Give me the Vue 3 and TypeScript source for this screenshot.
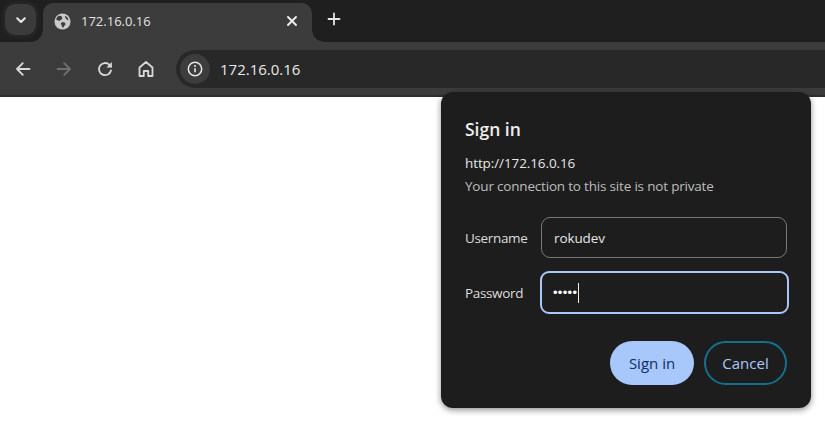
<script setup lang="ts">
const tabTitle = '172.16.0.16'
</script>

<template>
  <div class="page">
    <header class="chrome">
      <div class="strip">
        <button class="tab-search" aria-label="Search tabs">
          <svg width="12" height="12" viewBox="0 0 12 12"><path d="M2.200 4.200 6 8l3.800-3.800" fill="none" stroke="#e8e8e8" stroke-width="2" stroke-linecap="round" stroke-linejoin="round"/></svg>
        </button>
        <div class="tab">
          <svg class="globe" width="17" height="17" viewBox="0 0 18 18">
            <circle cx="9" cy="9" r="8.500" fill="#c9c9c9"/>
            <path d="M5 3c1.600 0 3 .4 3.600 1.400.6 1 .1 1.900-.8 2.400-1 .5-1.200 1.300-2.200 1.400C4.400 8.300 3.200 7.400 2.200 7 2.600 5.400 3.600 4 5 3ZM8 10c1.500-.4 3.400 0 4 1 .4.900-.3 1.600-.8 2.300-.5.800-.8 1.800-1.800 2.300-.8-.5-.9-1.500-1.300-2.500C7.400 12 6.800 10.400 8 10ZM11.800 3c1.800.9 3.100 2.300 3.700 4.200-1.200.4-2.200-.2-2.700-1.100-.6-1-1.600-1.200-1-3.100Z" fill="#3c3c3c"/>
          </svg>
          <span class="tab-title">{{ tabTitle }}</span>
          <svg class="close" width="12" height="12" viewBox="0 0 12 12"><path d="M2 2l8 8M10 2l-8 8" stroke="#eee" stroke-width="1.900" stroke-linecap="round"/></svg>
        </div>
        <svg class="plus" width="14" height="14" viewBox="0 0 14 14"><path d="M7 1.500v11M1.500 7h11" stroke="#e6e6e6" stroke-width="1.800" stroke-linecap="round"/></svg>
      </div>
      <div class="toolbar">
        <svg class="nav" width="18" height="18" viewBox="0 0 18 18"><path d="M15.500 9H3M8.800 3.200 3 9l5.800 5.800" fill="none" stroke="#d8d8d8" stroke-width="1.800" stroke-linecap="round" stroke-linejoin="round"/></svg>
        <svg class="nav" width="18" height="18" viewBox="0 0 18 18"><path d="M2.500 9H15M9.200 3.200 15 9l-5.800 5.800" fill="none" stroke="#6f6f6f" stroke-width="1.800" stroke-linecap="round" stroke-linejoin="round"/></svg>
        <svg class="nav" width="18" height="18" viewBox="0 0 18 18"><path d="M15 10.500A6.100 6.100 0 1 1 13.300 4.700L15 6.500" fill="none" stroke="#d8d8d8" stroke-width="1.800" stroke-linecap="round"/><path d="M15.800 2v5.400h-5.400z" fill="#d8d8d8"/></svg>
        <svg class="nav" width="18" height="18" viewBox="0 0 18 18"><path d="M2.500 16V7.500L9 2l6.500 5.500V16h-4.300v-5H6.800v5Z" fill="none" stroke="#d8d8d8" stroke-width="1.800" stroke-linejoin="round"/></svg>
        <div class="omnibox">
          <span class="info">
            <svg width="16" height="16" viewBox="0 0 16 16"><circle cx="8" cy="8" r="6.700" fill="none" stroke="#e8e8e8" stroke-width="1.500"/><path d="M8 7.200v4" stroke="#e8e8e8" stroke-width="1.600"/><circle cx="8" cy="4.900" r="1" fill="#e8e8e8"/></svg>
          </span>
          <span class="url">172.16.0.16</span>
        </div>
      </div>
    </header>

    <main class="content">
      <section class="dialog">
        <h1>Sign in</h1>
        <p class="origin">http://172.16.0.16</p>
        <p class="warning">Your connection to this site is not private</p>
        <div class="field first">
          <label>Username</label>
          <div class="input">rokudev</div>
        </div>
        <div class="field second">
          <label>Password</label>
          <div class="input focused"><span class="dots">•••••</span><i class="caret"></i></div>
        </div>
        <div class="actions">
          <button class="primary">Sign in</button>
          <button class="secondary">Cancel</button>
        </div>
      </section>
    </main>
  </div>
</template>

<style>
html, body { margin: 0; background: #fff; }
</style>

<style scoped>
.page { width: 825px; height: 428px; overflow: hidden; background: #fff; font-family: "Open Sans", "Noto Sans", sans-serif; }
.chrome { height: 97px; display: flex; flex-direction: column; }
.strip { height: 42px; background: #1f1f1f; display: flex; align-items: flex-end; position: relative; }
.tab-search { width: 31px; height: 31px; margin: 0 0 7px 5px; border: 0; border-radius: 10px; background: #3b3b3b; display: flex; align-items: center; justify-content: center; padding: 0; box-shadow: 0 0 0 3px #242424; }
.tab { width: 269px; height: 39px; margin-left: 7px; background: #3c3c3c; border-radius: 10px 10px 0 0; display: flex; align-items: center; padding: 0 14px 3px 11px; box-sizing: border-box; position: relative; }
.tab::after { content: ""; position: absolute; right: -12px; bottom: 0; width: 12px; height: 12px; background: radial-gradient(circle at 100% 0, transparent 11.500px, #3c3c3c 12px); }
.tab::before { content: ""; position: absolute; left: -12px; bottom: 0; width: 12px; height: 12px; background: radial-gradient(circle at 0 0, transparent 11.500px, #3c3c3c 12px); }
.globe { flex: none; }
.tab-title { margin-left: 10px; font-size: 13px; color: #e3e3e3; flex: 1; }
.close { flex: none; }
.plus { margin: 0 0 16px 15px; }
.toolbar { flex: 1; background: #3c3c3c; display: flex; align-items: center; padding-left: 14px; border-bottom: 2px solid #2f2f2f; box-sizing: border-box; }
.nav { flex: none; margin-right: 23px; }
.nav:nth-of-type(4) { margin-right: 21px; }
.omnibox { flex: 1; height: 38px; background: #282828; border-radius: 19px 0 0 19px; display: flex; align-items: center; padding-left: 4px; }
.info { width: 30px; height: 30px; border-radius: 50%; background: #3d3d3d; display: flex; align-items: center; justify-content: center; }
.url { margin-left: 10px; font-size: 15px; color: #e8e8e8; }
.content { flex: 1; position: relative; }
.dialog { position: absolute; left: 441px; top: -5px; width: 370px; height: 316px; box-sizing: border-box; padding: 25px 23px 0 24px; background-color: #1e1d1e; border-radius: 12px; box-shadow: 0 2px 6px rgba(0,0,0,.45); color: #e6e6e6; }
h1 { margin: 0; font-size: 17.500px; line-height: 24px; font-weight: 600; color: #eee; }
.origin { margin: 13px 0 0; font-size: 13.500px; letter-spacing: -.1px; line-height: 18px; color: #e6e6e6; }
.warning { margin: 5px 0 0; font-size: 13.500px; letter-spacing: -.19px; line-height: 18px; color: #bdbdbd; }
.field { display: flex; align-items: center; }
.field label { width: 76px; font-size: 13.500px; letter-spacing: -.35px; color: #dcdcdc; flex: none; }
.field.first { margin-top: 22px; }
.field.second { margin-top: 13px; }
.input { flex: none; width: 246px; height: 41px; box-sizing: border-box; border: 1px solid #777; border-radius: 9px; padding: 0 12px; display: flex; align-items: center; font-size: 13.500px; letter-spacing: -.1px; color: #e6e6e6; }
.input.focused { height: 43px; width: 249px; margin-left: -1px; border: 2px solid #a9c7f7; padding: 0 11px; }
.dots { font-size: 13px; letter-spacing: .3px; color: #fff; font-family: "Liberation Sans", sans-serif; }
.caret { display: block; width: 1px; height: 20px; background: #eee; margin-left: 1px; }
.actions { display: flex; justify-content: flex-end; gap: 10px; margin: 27px 1px 0 0; }
button { font-family: inherit; }
.actions button { height: 44px; border-radius: 22px; font-size: 15px; font-weight: 500; padding: 0; box-sizing: border-box; cursor: default; }
.primary { width: 84px; border: 0; background: #a8c7fa; color: #0c2f66; }
.secondary { width: 83px; border: 2px solid #14708f; background: transparent; color: #a8c7fa; }
</style>
